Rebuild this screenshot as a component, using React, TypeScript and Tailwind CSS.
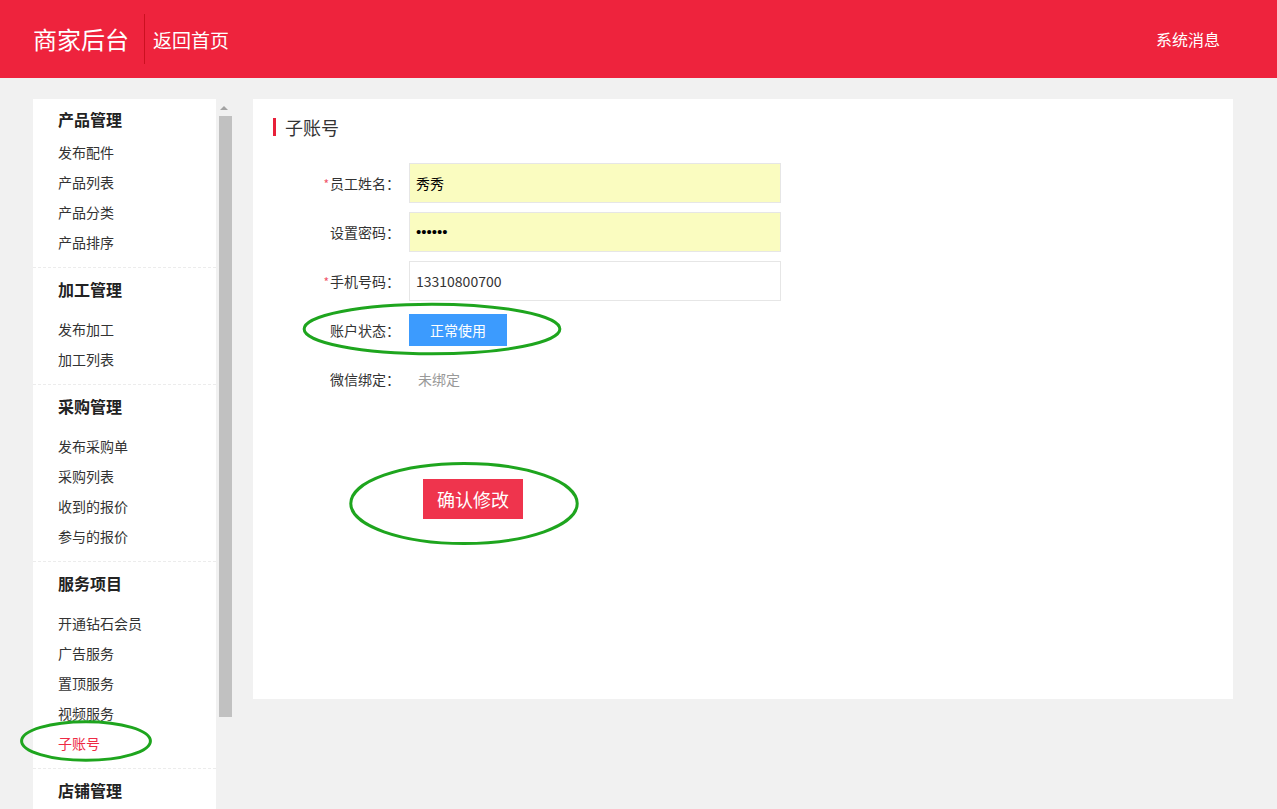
import React from 'react';

type NavSection = {
  title: string;
  items: string[];
  first?: boolean;
};

const sections: NavSection[] = [
  { title: '产品管理', items: ['发布配件', '产品列表', '产品分类', '产品排序'], first: true },
  { title: '加工管理', items: ['发布加工', '加工列表'] },
  { title: '采购管理', items: ['发布采购单', '采购列表', '收到的报价', '参与的报价'] },
  { title: '服务项目', items: ['开通钻石会员', '广告服务', '置顶服务', '视频服务', '子账号'] },
  { title: '店铺管理', items: [] },
];

const ACTIVE = '子账号';

function Sidebar() {
  return (
    <div className="flex h-[710px] shrink-0">
      <div className="w-[183px] bg-white overflow-hidden">
        {sections.map((s) => (
          <div
            key={s.title}
            className={`pb-[10px] ${s.first ? 'pt-[5px]' : 'pt-[6px] border-t border-dashed border-[#ececec]'}`}
          >
            <div className={`h-[30px] flex items-center pl-[25px] text-[16px] font-bold text-[#222] ${s.first ? 'mb-[3px]' : 'mb-[10px]'}`}>
              {s.title}
            </div>
            {s.items.map((item) => (
              <div
                key={item}
                className={`h-[30px] flex items-center pl-[25px] text-[14px] ${item === ACTIVE ? 'text-[#ee2a45]' : 'text-[#333]'}`}
              >
                {item}
              </div>
            ))}
          </div>
        ))}
      </div>
      {/* fake scrollbar */}
      <div className="w-[16px] bg-[#f1f1f1] flex flex-col items-center">
        <div className="h-[17px] flex items-center justify-center">
          <div className="w-0 h-0 border-l-[4px] border-r-[4px] border-b-[4px] border-l-transparent border-r-transparent border-b-[#a3a3a3]" />
        </div>
        <div className="w-[13px] ml-[3px] h-[601px] bg-[#c1c1c1]" />
      </div>
    </div>
  );
}

function FormRow({ label, required, children }: { label: string; required?: boolean; children: React.ReactNode }) {
  return (
    <div className="flex items-center h-[40px] mb-[9px]">
      <div className="w-[149px] text-right text-[14px] text-[#333] pr-[2px]">
        {required && <span className="text-[#f0556b] text-[12px] mr-[1px]">*</span>}
        {label}：
      </div>
      <div className="ml-[7px] flex items-center h-full">{children}</div>
    </div>
  );
}

function Ellipse({ className }: { className: string }) {
  return (
    <svg className={`absolute pointer-events-none ${className}`} viewBox="0 0 100 100" preserveAspectRatio="none">
      <ellipse
        cx="50"
        cy="50"
        rx="48.8"
        ry="46"
        fill="none"
        stroke="#1ea51e"
        strokeWidth="3"
        vectorEffect="non-scaling-stroke"
      />
    </svg>
  );
}

export default function App() {
  return (
    <div
      className="relative w-[1277px] h-[809px] overflow-hidden bg-[#f1f1f1]"
      style={{ fontFamily: '"Noto Sans CJK SC", "Noto Sans", "Liberation Sans", sans-serif' }}
    >
      {/* header */}
      <header className="h-[78px] bg-[#ee233d] flex items-center pl-[33px] pr-[57px] text-white">
        <div className="text-[24px] leading-none">商家后台</div>
        <div className="w-px h-[50px] bg-[#cc1020] ml-[15px] mr-[8px]" />
        <div className="text-[19px] leading-none">返回首页</div>
        <div className="ml-auto text-[16px]">系统消息</div>
      </header>

      <div className="flex pt-[21px] pl-[33px]">
        <Sidebar />

        <main className="ml-[21px] w-[980px] h-[600px] bg-white">
          <div className="flex items-center pt-[18px] pl-[20px]">
            <div className="w-[3px] h-[18px] bg-[#e8203a]" />
            <div className="ml-[9px] text-[18px] text-[#333] leading-[20px]">子账号</div>
          </div>

          <div className="mt-[26px]">
            <FormRow label="员工姓名" required>
              <div className="w-[372px] h-[40px] border border-[#e6e6e6] bg-[#fafcc0] flex items-center pl-[6px] text-[14px] text-black">
                秀秀
              </div>
            </FormRow>
            <FormRow label="设置密码">
              <div className="w-[372px] h-[40px] border border-[#e6e6e6] bg-[#fafcc0] flex items-center pl-[6px] text-[15px] text-black font-['Liberation_Sans',sans-serif]">
                ••••••
              </div>
            </FormRow>
            <FormRow label="手机号码" required>
              <div className="w-[372px] h-[40px] border border-[#e6e6e6] bg-white flex items-center pl-[6px] text-[14px] text-[#333]">
                13310800700
              </div>
            </FormRow>
            <FormRow label="账户状态">
              <button className="w-[98px] h-[32px] bg-[#3c9bfe] text-white text-[14px]">正常使用</button>
            </FormRow>
            <FormRow label="微信绑定">
              <span className="pl-[9px] text-[14px] text-[#999]">未绑定</span>
            </FormRow>
          </div>

          <div className="mt-[80px] pl-[170px]">
            <button className="w-[100px] h-[40px] bg-[#ef344d] text-white text-[18px]">确认修改</button>
          </div>
        </main>
      </div>

      {/* annotation marks */}
      <Ellipse className="left-[301px] top-[302px] w-[262px] h-[54px]" />
      <Ellipse className="left-[348px] top-[460px] w-[232px] h-[87px]" />
      <Ellipse className="left-[20px] top-[720px] w-[132px] h-[42px]" />
    </div>
  );
}
